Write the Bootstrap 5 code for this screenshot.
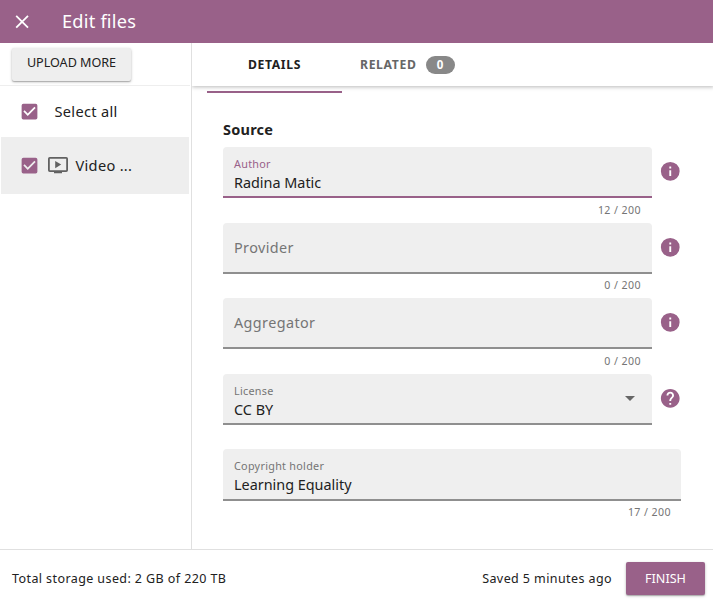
<!DOCTYPE html>
<html lang="en">
<head>
<meta charset="utf-8">
<meta name="viewport" content="width=device-width, initial-scale=1">
<title>Edit files</title>
<link href="https://cdn.jsdelivr.net/npm/bootstrap@5.3.0/dist/css/bootstrap.min.css" rel="stylesheet">
<style>
:root{--plum:#996189}
body{font-family:"Noto Sans",sans-serif;color:#212121;font-size:14px;line-height:20px;background:#fff}
svg{display:block;flex:none}
.topbar{height:43px;background:var(--plum);color:#fff;padding-left:12px}
.topbar h1{font-size:18.2px;line-height:24px;letter-spacing:.22px;margin:-2px 0 0 30px;font-weight:400}
.side{width:192px;border-right:1px solid #e0e0e0}
.upload{height:43px;padding:5px 0 0 12px;border-bottom:1px solid #eee;margin-right:1px}
.raised{border:0;border-radius:2px;height:33px;padding:0;font-size:12.6px;line-height:31px;box-shadow:0 1px 3px rgba(0,0,0,.25),0 1px 1px rgba(0,0,0,.18)}
.btn-upload{width:119px;background:#eee;color:#212121;letter-spacing:-.02px;line-height:29px;padding-bottom:4px}
.btn-finish{width:79px;background:var(--plum);color:#fff;letter-spacing:0;margin-left:14px}
.side-row{font-size:14.6px;letter-spacing:.3px}
.pick-all span{margin-top:-1px}
.pick-all{height:51px;padding-left:18.5px;gap:15px}
.file-row{height:57px;margin:0 2px 0 1px;padding:0 0 1px 17.5px;background:#eee;gap:8px}
.tabs{height:43px;padding-left:15px;font-size:12.2px;font-weight:700;letter-spacing:.65px;box-shadow:0 1px 4px rgba(0,0,0,.28);clip-path:inset(0 0 -8px 0)}
.tab-on{width:135px}
.tab-off{padding-left:18px;color:#666;gap:9px}
.count{width:29px;height:18px;border-radius:9px;background:#888;color:#fff;font-size:11.5px;line-height:18px;letter-spacing:0}
.slider{height:2px;width:135px;margin-left:15px;background:var(--plum)}
.pane{border-right:1px solid #eee;height:449px;margin-bottom:14px;padding-top:5px}
.form-area{padding:26px 31px 0}
.form-area h2{font-size:14.5px;line-height:20px;font-weight:700;letter-spacing:.22px;margin:0 0 8px}
.entry{height:75.6px}
.field{width:429px;height:51px;border-bottom:2px solid #8f8f8f;border-radius:4px 4px 0 0;background:#efefef;padding:9px 11px 0}
.field.wide{width:458px;height:52px}
.field.active{border-color:var(--plum)}
.field.active .cap{color:var(--plum)}
.cap{font-size:10.8px;line-height:16px;letter-spacing:.28px;color:#757575}
.val{font-size:14.4px;line-height:22px;letter-spacing:0}
.empty{font-size:14.4px;line-height:32px;letter-spacing:.4px;color:#757575}
.tally{font-size:10.6px;line-height:16px;letter-spacing:.42px;color:#757575;width:429px;padding:3.5px 11px 0 0;text-align:right}
.tally.wide{width:458px;padding-right:10px;padding-top:3px}
.hint{margin:13px 0 0 7px}
.caret{margin-top:13px;margin-right:6px;width:0;height:0;border:5px solid transparent;border-top-color:#666;border-bottom:0}
.foot{height:54px;border-top:1px solid #e0e0e0;padding:4px 8px 0 12px;font-size:12.5px;letter-spacing:.41px}
</style>
<script src="https://cdn.jsdelivr.net/npm/bootstrap@5.3.0/dist/js/bootstrap.bundle.min.js" defer></script>
</head>
<body class="vh-100 overflow-hidden d-flex flex-column">
<svg width="0" height="0" class="d-none">
  <symbol id="check" viewBox="0 0 24 24"><path d="M19 3H5a2 2 0 0 0-2 2v14a2 2 0 0 0 2 2h14a2 2 0 0 0 2-2V5a2 2 0 0 0-2-2zm-9 14-5-5 1.41-1.41L10 14.17l7.59-7.59L19 8z" fill="#996189"/></symbol>
  <symbol id="info" viewBox="0 0 24 24"><path d="M12 2a10 10 0 1 0 0 20 10 10 0 0 0 0-20zm1 15h-2v-6h2zm0-8h-2V7h2z" fill="#996189"/></symbol>
  <symbol id="help" viewBox="0 0 24 24"><path d="M12 2C6.48 2 2 6.48 2 12s4.48 10 10 10 10-4.48 10-10S17.52 2 12 2zm1 17h-2v-2h2v2zm2.07-7.75-.9.92C13.45 12.9 13 13.5 13 15h-2v-.5c0-1.1.45-2.1 1.17-2.83l1.24-1.26c.37-.36.59-.86.59-1.41 0-1.1-.9-2-2-2s-2 .9-2 2H8c0-2.21 1.79-4 4-4s4 1.79 4 4c0 .88-.36 1.68-.93 2.25z" fill="#996189"/></symbol>
</svg>
<header class="topbar d-flex align-items-center flex-shrink-0">
  <svg width="20" height="20" viewBox="0 0 20 20"><path d="M4.2 3.8 16 15.6M16 3.8 4.2 15.6" stroke="#fff" stroke-width="1.8"/></svg>
  <h1>Edit files</h1>
</header>
<div class="d-flex flex-grow-1">
  <aside class="side flex-shrink-0">
    <div class="upload"><button class="btn raised btn-upload d-block">UPLOAD MORE</button></div>
    <div class="side-row pick-all d-flex align-items-center"><svg width="21" height="21"><use href="#check"/></svg><span>Select all</span></div>
    <div class="side-row file-row d-flex align-items-center">
      <svg width="21" height="21"><use href="#check"/></svg>
      <svg width="20" height="17" viewBox="0 0 20 17"><path d="M1.8.9h16.4q.9 0 .9.9v11.4q0 .9-.9.9H1.8q-.9 0-.9-.9V1.8Q.9.9 1.8.9z" fill="none" stroke="#616161" stroke-width="1.8"/><path d="M6 14h8v2.2H6zM7.2 4v7.2l6-3.6z" fill="#616161"/></svg>
      <span>Video ...</span>
    </div>
  </aside>
  <main class="flex-grow-1">
    <nav class="tabs d-flex">
      <div class="tab-on d-flex align-items-center justify-content-center">DETAILS</div>
      <div class="tab-off d-flex align-items-center"><span>RELATED</span><span class="count text-center">0</span></div>
    </nav>
    <div class="pane">
      <div class="slider"></div>
      <form class="form-area">
        <h2>Source</h2>
        <div class="entry"><div class="d-flex"><div class="field active"><div class="cap">Author</div><div class="val">Radina Matic</div></div><svg class="hint" width="22.5" height="22.5"><use href="#info"/></svg></div><div class="tally">12 / 200</div></div>
        <div class="entry"><div class="d-flex"><div class="field"><div class="empty">Provider</div></div><svg class="hint" width="22.5" height="22.5"><use href="#info"/></svg></div><div class="tally">0 / 200</div></div>
        <div class="entry"><div class="d-flex"><div class="field"><div class="empty">Aggregator</div></div><svg class="hint" width="22.5" height="22.5"><use href="#info"/></svg></div><div class="tally">0 / 200</div></div>
        <div class="entry"><div class="d-flex"><div class="field d-flex justify-content-between"><div><div class="cap">License</div><div class="val">CC BY</div></div><span class="caret"></span></div><svg class="hint" width="22.5" height="22.5"><use href="#help"/></svg></div></div>
        <div class="entry"><div class="field wide"><div class="cap">Copyright holder</div><div class="val">Learning Equality</div></div><div class="tally wide">17 / 200</div></div>
      </form>
    </div>
  </main>
</div>
<footer class="foot d-flex align-items-center flex-shrink-0">
  <span class="me-auto">Total storage used: 2 GB of 220 TB</span>
  <span>Saved 5 minutes ago</span>
  <button class="btn raised btn-finish">FINISH</button>
</footer>
</body>
</html>
